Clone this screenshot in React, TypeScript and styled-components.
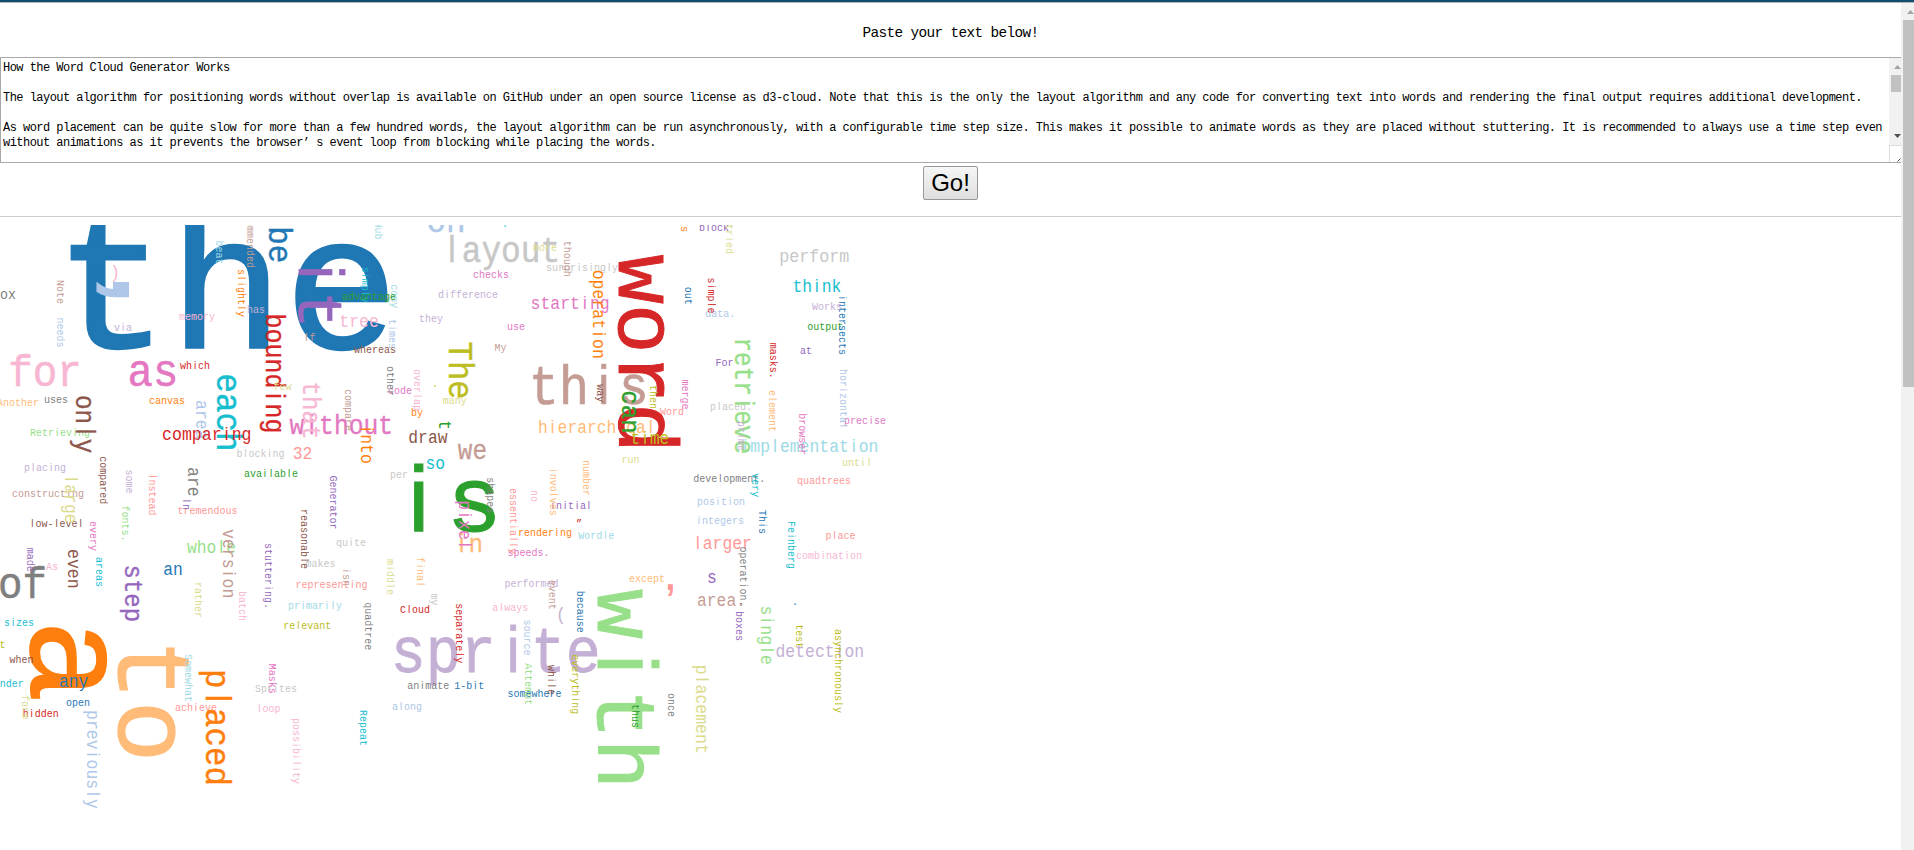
import React from 'react';
import styled, { createGlobalStyle } from 'styled-components';

const GlobalStyle = createGlobalStyle`
  html, body { margin: 0; background: #fff; }
  body { height: 850px; overflow: hidden; }
`;

const Page = styled.div`
  display: flex;
  flex-direction: column;
  height: 850px;
  overflow: hidden;
`;

const TopBar = styled.div`
  flex: none;
  height: 2px;
  background: #0f4e6e;
  border-bottom: 1px solid #b4b4b4;
`;

const Body = styled.div`
  flex: 1;
  display: flex;
  min-height: 0;
`;

const Content = styled.main`
  width: 1901px;
  display: flex;
  flex-direction: column;
  align-items: center;
  color: #000;
`;

const Caption = styled.div`
  height: 54px;
  line-height: 60px;
  font-family: 'Liberation Mono', monospace;
  font-size: 14.4px;
  letter-spacing: -0.64px;
`;

const TextBox = styled.div`
  box-sizing: border-box;
  width: 1901px;
  height: 106px;
  display: flex;
  border: 1px solid #a9a9a9;
  border-right: 0;
`;

const TextLines = styled.div`
  flex: 1;
  padding: 3px 0 0 2px;
  overflow: hidden;
  white-space: pre;
  font-family: 'Liberation Mono', monospace;
  font-size: 12px;
  letter-spacing: -0.538px;
  line-height: 15px;
`;

const Track = styled.div<{ $width: number }>`
  flex: none;
  width: ${(p) => p.$width}px;
  display: flex;
  flex-direction: column;
  background: #f1f1f1;
`;

const ArrowBox = styled.div<{ $height: number }>`
  flex: none;
  height: ${(p) => p.$height}px;
  display: flex;
  align-items: center;
  justify-content: flex-end;
`;

const Thumb = styled.div<{ $height: number }>`
  flex: none;
  height: ${(p) => p.$height}px;
  margin-left: 2px;
  background: #c1c1c1;
`;

const Spacer = styled.div`
  flex: 1;
`;

const Corner = styled.div`
  box-sizing: border-box;
  height: 17px;
  display: flex;
  align-items: flex-end;
  justify-content: flex-end;
  background: #fff;
  border-top: 1px solid #dcdcdc;
  border-left: 1px solid #dcdcdc;
`;

const GoButton = styled.button`
  box-sizing: border-box;
  width: 55px;
  height: 34px;
  margin: 3px 0 0;
  padding: 0;
  border: 1px solid #999;
  border-radius: 2px;
  background: linear-gradient(#f6f6f6, #dedede);
  color: #000;
  font: 24px/30px 'Liberation Sans', Arial, sans-serif;
`;

const Rule = styled.hr`
  width: 100%;
  height: 0;
  margin: 16px 0 8px;
  border: 0;
  border-top: 1px solid #ccc;
`;

const Cloud = styled.svg`
  display: block;
  width: 1901px;
  height: 625px;
  font-family: 'Liberation Mono', monospace;
  text-anchor: middle;
`;

const Slim = styled.tspan`
  font-family: 'Liberation Sans', sans-serif;
`;

const Heavy = styled.tspan`
  font-family: 'Liberation Sans', sans-serif;
  font-weight: bold;
`;

const C = {
  blue: '#1f77b4', sky: '#aec7e8', orange: '#ff7f0e', peach: '#ffbb78', green: '#2ca02c',
  mint: '#98df8a', red: '#d62728', salmon: '#ff9896', purple: '#9467bd', lilac: '#c5b0d5',
  brown: '#8c564b', tan: '#c49c94', pink: '#e377c2', rose: '#f7b6d2', gray: '#7f7f7f',
  silver: '#c7c7c7', olive: '#bcbd22', khaki: '#dbdb8d', teal: '#17becf', aqua: '#9edae5',
};

type Tone = keyof typeof C;
// text, tone, start x, baseline y, letter cell width
type Flat = [string, Tone, number, number, number?];
// text, tone, baseline x, start y, letter cell width
type Turned = [string, Tone, number, number, number?];

const flat: Flat[] = [
  ['the', 'blue', 54, 348, 115],
  ['box', 'gray', -8, 299.7, 8],
  [')', 'rose', 110, 279, 10],
  ['via', 'lilac', 114, 331.7],
  ['memory', 'rose', 179, 321],
  ['has', 'lilac', 247, 313.3],
  ['for', 'rose', 8.3, 386.3, 24.5],
  ['as', 'pink', 127.5, 387, 25.4],
  ['which', 'red', 180, 370],
  ['Another', 'peach', -3, 406.7],
  ['uses', 'gray', 44, 404],
  ['canvas', 'orange', 149, 405],
  ['Retrieving', 'mint', 30, 437],
  ['blocking', 'silver', 236.5, 458],
  ['available', 'green', 244, 477.7],
  ['placing', 'lilac', 24, 472],
  ['constructing', 'tan', 12, 497.7],
  ['tremendous', 'salmon', 177.5, 514.3],
  ['low-level', 'brown', 29.5, 527.7],
  ['As', 'rose', 46, 571],
  ['of', 'gray', -2, 599, 24.5],
  ['an', 'blue', 163.3, 575.3, 9.8],
  ['whole', 'mint', 187, 553.7, 9.8],
  ['sizes', 'teal', 4, 627],
  ['t', 'olive', -0.5, 648.5],
  ['under', 'teal', -6.3, 687.7],
  ['open', 'blue', 66, 706.7],
  ['hidden', 'red', 22.7, 717.7],
  ['achieve', 'salmon', 175, 711.7],
  ['Sprites', 'silver', 255, 693],
  ['loop', 'rose', 256.5, 712.7],
  ['on', 'sky', 426.5, 232.8, 19.6],
  ['layout', 'silver', 442, 262.4, 19.7],
  ['more', 'khaki', 533, 251.3],
  ['surprisingly', 'silver', 546, 271.3],
  ['checks', 'pink', 473, 278.7],
  ['difference', 'lilac', 438, 298.7],
  ['they', 'lilac', 419, 322.7],
  ['use', 'pink', 507, 330.7],
  ['My', 'tan', 494.5, 351.7],
  ['starting', 'pink', 530.5, 310, 9.9],
  ['tree', 'rose', 339.3, 328, 9.9],
  ['whereas', 'brown', 354, 353.7],
  ['If', 'tan', 303.5, 341.7],
  ['code', 'pink', 388, 395],
  ['many', 'khaki', 442.7, 404.7],
  ['by', 'orange', 411, 416.7],
  ['without', 'pink', 289.5, 434.6, 14.8],
  ['32', 'salmon', 292.7, 460, 9.8],
  ['draw', 'brown', 408.3, 444, 9.8],
  ['we', 'tan', 457.8, 460, 14.6],
  ['so', 'teal', 425.5, 469.3, 9.8],
  ['per', 'silver', 390, 478.7],
  ['is', 'green', 391, 530.5, 55.5],
  ['in', 'peach', 454.5, 552.3, 14.2],
  ['initial', 'purple', 550, 510],
  ['hierarchical', 'peach', 538, 433.7, 9.8],
  ['this', 'tan', 529, 405, 29.9],
  ['block', 'purple', 699, 231.7],
  ['data.', 'sky', 705.3, 317.7],
  ['perform', 'silver', 779.3, 262.3, 10],
  ['think', 'teal', 792.4, 292.7, 9.8],
  ['Works', 'lilac', 812, 310.7],
  ['output', 'green', 807.3, 330.7],
  ['at', 'purple', 800, 354.7],
  ['For', 'purple', 715.5, 366.7],
  ['Word', 'salmon', 660, 415.7],
  ['placed.', 'silver', 710, 410.7],
  ['precise', 'pink', 844, 424.7],
  ['implementation', 'aqua', 740.5, 452.7, 9.85],
  ['run', 'khaki', 621.5, 464],
  ['until', 'khaki', 842, 466.7],
  ['development.', 'gray', 693.3, 482.7],
  ['quadtrees', 'salmon', 797, 485],
  ['position', 'sky', 697, 505.7],
  ['integers', 'sky', 696, 524.7],
  ['Wordle', 'aqua', 578.3, 539.3],
  ['larger', 'salmon', 693, 549.7, 9.8],
  ['place', 'salmon', 825.5, 539.3],
  ['combination', 'rose', 796, 559.7],
  ['except', 'peach', 629, 582.7],
  [',', 'salmon', 660, 590.5, 21],
  ['s', 'purple', 707, 583.3, 9.8],
  ['area.', 'tan', 697, 606.7, 9.8],
  ['.', 'blue', 792, 605.5],
  ['.', 'teal', 502, 228],
  ['.', 'olive', 432, 387.5],
  ['detection', 'lilac', 775.5, 657.7, 9.85],
  ['quite', 'silver', 336, 546.3],
  ['makes', 'silver', 305.5, 567.3],
  ['representing', 'salmon', 295.5, 588.3],
  ['primarily', 'aqua', 288, 610],
  ['relevant', 'olive', 283.3, 629.7],
  ['Cloud', 'red', 400, 613.7],
  ['speeds.', 'pink', 507.5, 557],
  ['rendering', 'orange', 518, 536.3],
  ['”', 'red', 576, 528],
  ['performed', 'lilac', 504.5, 588],
  ['(', 'lilac', 556, 621, 10],
  ['always', 'rose', 492.3, 611.3],
  ['sprite', 'lilac', 390.8, 673, 35],
  ['animate', 'gray', 407.3, 689.7],
  ['1-bit', 'blue', 454.3, 689.7],
  ['somewhere', 'blue', 507.5, 697.7],
  ['along', 'sky', 392, 710.7],
];

const turned: Turned[] = [
  [',', 'sky', 112.5, 257, 65],
  ['be', 'blue', 270, 226.3, 18.5],
  ['Note', 'tan', 58, 280],
  ['needs', 'sky', 57.3, 317.5],
  ['beat', 'aqua', 216.3, 240.5],
  ['recommended', 'tan', 248, 202],
  ['slightly', 'orange', 238.5, 269],
  ['only', 'brown', 76.3, 395, 14.6],
  ['area', 'sky', 196.8, 400, 9.9],
  ['each', 'teal', 217.3, 373.3, 19.6],
  ['bounding', 'red', 267, 313.6, 15],
  ['compared', 'brown', 100.3, 456.3],
  ['some', 'lilac', 126.3, 469.5],
  ['large', 'khaki', 65.5, 474.5, 9.8],
  ['Instead', 'salmon', 150, 473.5],
  ['are', 'gray', 188.5, 467, 9.9],
  ['In', 'purple', 183.3, 498],
  ['fonts.', 'mint', 122.7, 505.5],
  ['every', 'pink', 91, 521],
  ['made', 'purple', 27.5, 547.7],
  ['even', 'brown', 68.5, 549, 9.9],
  ['areas', 'teal', 96.5, 557],
  ['step', 'purple', 126, 564.5, 14.4],
  ['version', 'tan', 223.5, 529, 9.9],
  ['rather', 'khaki', 195.3, 582],
  ['batch', 'rose', 239.5, 591],
  ['stuttering.', 'purple', 265.3, 543],
  ['a', 'orange', 31, 619.5, 83],
  ['form', 'khaki', 22.5, 695],
  ['to', 'peach', 118.5, 638.5, 62],
  ['Somewhat', 'aqua', 185.5, 654],
  ['placed', 'orange', 207, 669, 19.5],
  ['Masks', 'pink', 269.3, 663.7],
  ['possibility', 'rose', 294, 718],
  ['previously', 'sky', 87.6, 710, 9.9],
  ['GitHub', 'aqua', 375.5, 203.5],
  ['though', 'tan', 564.5, 240.7],
  ['operation', 'orange', 593.6, 269.7, 9.9],
  ['it', 'purple', 298.5, 253.5, 37.5],
  ['simply', 'teal', 363, 266.7],
  ['copy', 'aqua', 392, 284.3],
  ['times', 'sky', 389.3, 319],
  ['The', 'olive', 449.6, 341.5, 19.4],
  ['that', 'rose', 303.3, 381.5, 14.5],
  ['compare', 'tan', 345.3, 389],
  ['other', 'gray', 387.6, 366],
  ['overlap', 'rose', 414.5, 369],
  ['t', 'green', 439.5, 420.3, 9.8],
  ['into', 'orange', 361.3, 424.5, 9.8],
  ['pixel', 'pink', 460, 500.3, 9.9],
  ['shapes', 'gray', 487.5, 477.3],
  ['essentially', 'salmon', 510.3, 488],
  ['no', 'rose', 531.5, 490],
  ['involves', 'peach', 550.3, 467.7],
  ['number', 'peach', 583.3, 460],
  ['Generator', 'purple', 331, 475.5],
  ['reasonable', 'brown', 302, 509],
  ['way', 'brown', 597.6, 384.3],
  ['tasks', 'orange', 681.3, 202],
  ['tried', 'khaki', 727, 224],
  ['word', 'red', 619, 254.5, 49.6],
  ['out', 'blue', 685.6, 286.7],
  ['simple', 'red', 708.3, 277.5],
  ['intersects', 'blue', 839.5, 295],
  ['masks.', 'red', 771, 342.7],
  ['retrieve', 'mint', 736, 337.5, 14.6],
  ['prime', 'lilac', 738.6, 421],
  ['horizontal', 'sky', 840.5, 369],
  ['merge', 'pink', 682.3, 379.5],
  ['then', 'olive', 651, 385],
  ['can', 'green', 622.3, 390.3, 14.5],
  ['element', 'peach', 769.6, 390],
  ['browser', 'pink', 799.6, 413.3],
  ['very', 'teal', 753, 473.3],
  ['This', 'blue', 759.3, 510],
  ['operation.', 'gray', 741, 546.5],
  ['Feinberg', 'teal', 788.6, 521],
  ['boxes', 'purple', 736.3, 611],
  ['single', 'mint', 762, 605.5, 9.9],
  ['test', 'olive', 796.3, 624.3],
  ['asynchronously', 'olive', 835.6, 629],
  ['placement', 'khaki', 696.3, 664.7, 9.9],
  ['once', 'gray', 668.6, 693],
  ['with', 'mint', 598, 589, 50],
  ['thus', 'green', 632.6, 704],
  ['isn', 'tan', 343.6, 568],
  ['middle', 'khaki', 387.6, 559],
  ['final', 'peach', 417.3, 557],
  ['my', 'silver', 431.3, 593.5],
  ['separately', 'red', 456.3, 603.3],
  ['quadtree', 'gray', 365.3, 602.3],
  ['event', 'tan', 549.6, 579.7],
  ['because', 'blue', 578, 590.7],
  ['source', 'sky', 524.3, 619.5],
  ['Attempt', 'mint', 525.3, 663.3],
  ['while', 'brown', 548.6, 665],
  ['everything', 'olive', 573, 654.3],
  ['Repeat', 'teal', 360.3, 710],
];

// words that lie over the turned ones
const late: Flat[] = [
  ['advantage', 'green', 342, 300.7],
  ['comparing', 'red', 162, 441, 9.95],
  ['few', 'khaki', 273.5, 391],
  ['time', 'olive', 630.5, 444.3, 9.7],
  ['when', 'brown', 9.5, 663.7],
  ['any', 'blue', 59, 687.7, 9.8],
];

interface WordProps {
  text: string;
  tone: Tone;
  x: number;
  y: number;
  cell?: number;
  turn?: boolean;
}

function Word({ text, tone, x, y, cell = 6, turn = false }: WordProps) {
  const size = cell / 0.6;
  const large = cell > 36;
  const stretch = large ? 1 : 1.1;
  const lift = large ? 0 : 0.8;
  const xs = Array.from(text, (_, i) => ((i + 0.5) * cell).toFixed(2)).join(' ');
  const runs = text === ',' ? [] : text.split(/([ilI]+)/).filter(Boolean);
  const tx = turn ? x - lift : x;
  const ty = turn ? y : y - lift;
  return (
    <text
      x={xs}
      y={0}
      fontSize={size}
      fill={C[tone]}
      stroke={C[tone]}
      strokeWidth={cell > 12 && text !== ',' ? size * 0.012 : 0}
      transform={`translate(${tx} ${ty})${turn ? ' rotate(90)' : ''} scale(1 ${stretch})`}
    >
      {text === ',' && <Heavy>,</Heavy>}
      {runs.map((r, i) => (/^[ilI]/.test(r) ? <Slim key={i}>{r}</Slim> : <tspan key={i}>{r}</tspan>))}
    </text>
  );
}

function Arrow({ down = false, color }: { down?: boolean; color: string }) {
  return (
    <svg width="7" height="4" viewBox="0 0 7 4">
      <path d={down ? 'M0 0h7L3.5 4z' : 'M0 4h7L3.5 0z'} fill={color} />
    </svg>
  );
}

const lines = [
  'How the Word Cloud Generator Works',
  '',
  'The layout algorithm for positioning words without overlap is available on GitHub under an open source license as d3-cloud. Note that this is the only the layout algorithm and any code for converting text into words and rendering the final output requires additional development.',
  '',
  'As word placement can be quite slow for more than a few hundred words, the layout algorithm can be run asynchronously, with a configurable time step size. This makes it possible to animate words as they are placed without stuttering. It is recommended to always use a time step even',
  'without animations as it prevents the browser’ s event loop from blocking while placing the words.',
];

export default function App() {
  return (
    <>
      <GlobalStyle />
      <Page>
        <TopBar />
        <Body>
          <Content>
            <Caption>Paste your text below!</Caption>
            <TextBox>
              <TextLines>{lines.join('\n')}</TextLines>
              <Track $width={12}>
                <ArrowBox $height={17}><Arrow color="#a3a3a3" /></ArrowBox>
                <Thumb $height={17} />
                <Spacer />
                <ArrowBox $height={18}><Arrow down color="#505050" /></ArrowBox>
                <Corner>
                  <svg width="4" height="4" viewBox="0 0 4 4"><path d="M0.5 3.5L3.5 0.5" stroke="#555" /></svg>
                </Corner>
              </Track>
            </TextBox>
            <GoButton>Go!</GoButton>
            <Rule />
            <Cloud viewBox="0 225 1901 625">
              {flat.map(([t, c, x, y, w], i) => <Word key={i} text={t} tone={c} x={x} y={y} cell={w} />)}
              {turned.map(([t, c, x, y, w], i) => <Word key={i} text={t} tone={c} x={x} y={y} cell={w} turn />)}
              {late.map(([t, c, x, y, w], i) => <Word key={i} text={t} tone={c} x={x} y={y} cell={w} />)}
            </Cloud>
          </Content>
          <Track $width={13}>
            <ArrowBox $height={17}><Arrow color="#a3a3a3" /></ArrowBox>
            <Thumb $height={367} />
          </Track>
        </Body>
      </Page>
    </>
  );
}
